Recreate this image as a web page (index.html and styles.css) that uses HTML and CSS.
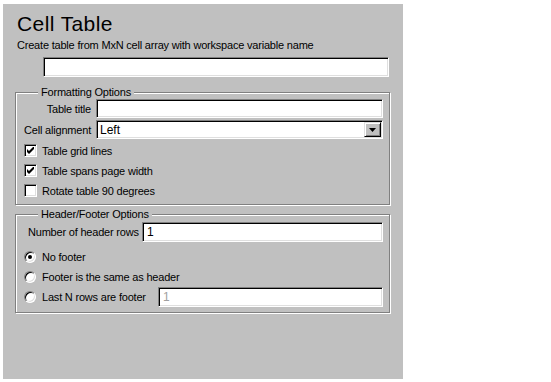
FILE: index.html
```html
<!DOCTYPE html>
<html lang="en">
<head>
    <meta charset="UTF-8">
    <title>Cell Table</title>
    <link rel="stylesheet" href="styles.css">
</head>
<body>

    <div class="panel">
        <h1 class="title">Cell Table</h1>
        <p class="intro">Create table from MxN cell array with workspace variable name</p>
        <div class="field var-name"></div>

        <!-- Formatting options -->
        <fieldset class="group group-format">
            <legend>Formatting Options</legend>
            <div class="row row-title">
                <label class="row-label">Table title</label>
                <div class="field grow"></div>
            </div>
            <div class="row row-select">
                <label class="row-label">Cell alignment</label>
                <div class="field select grow">
                    <span class="select-value">Left</span>
                    <span class="select-btn">
                        <svg width="7" height="4" viewBox="0 0 7 4"><path d="M0 0h7L3.5 4z" fill="#000"/></svg>
                    </span>
                </div>
            </div>
            <div class="check-list">
                <div class="check"><span class="box"><svg width="7" height="7" viewBox="0 0 7 7"><path d="M0 2v3l2 2 5-5V-1L2 4z" fill="#000"/></svg></span>Table grid lines</div>
                <div class="check"><span class="box"><svg width="7" height="7" viewBox="0 0 7 7"><path d="M0 2v3l2 2 5-5V-1L2 4z" fill="#000"/></svg></span>Table spans page width</div>
                <div class="check"><span class="box"></span>Rotate table 90 degrees</div>
            </div>
        </fieldset>

        <!-- Header / footer options -->
        <fieldset class="group group-header">
            <legend>Header/Footer Options</legend>
            <div class="row row-header">
                <label class="row-label">Number of header rows</label>
                <div class="field grow"><span class="field-text">1</span></div>
            </div>
            <div class="radio-list">
                <div class="radio"><span class="dot on"></span>No footer</div>
                <div class="radio"><span class="dot"></span>Footer is the same as header</div>
                <div class="radio radio-last">
                    <span class="dot"></span><span class="radio-text">Last N rows are footer</span>
                    <div class="field grow disabled"><span class="field-text">1</span></div>
                </div>
            </div>
        </fieldset>
    </div>

</body>
</html>
```

FILE: styles.css
```css
body {
    margin: 0;
    background-color: #fff;
    font-family: "Liberation Sans", Arial, sans-serif;
    font-size: 11px;
    letter-spacing: -0.2px;
    color: #000;
}
.panel {
    width: 400px;
    height: 375px;
    margin: 4px 0 0 3px;
    background-color: #c0c0c0;
    overflow: hidden;
}
.title {
    margin: 0;
    padding: 9px 0 0 14px;
    font-size: 21px;
    font-weight: normal;
    letter-spacing: 0.4px;
    line-height: 22px;
}
.intro {
    margin: 4px 0 0 14px;
    line-height: 13px;
}

/* sunken edit box */
.field {
    box-sizing: border-box;
    height: 20px;
    background-color: #fff;
    border: 1px solid;
    border-color: #808080 #fff #fff #808080;
    box-shadow: inset 1px 1px 0 #000, inset -1px -1px 0 #dfdfdf;
    display: flex;
    align-items: center;
}
.var-name {
    width: 346px;
    margin: 5px 0 0 40px;
}
.field-text {
    padding-left: 4px;
    font-size: 12px;
    letter-spacing: 0;
}
.disabled .field-text {
    color: #a0a0a0;
}
.grow {
    flex: 1;
}

/* etched group box */
.group {
    box-sizing: border-box;
    width: 375px;
    margin: 0 0 0 12px;
    padding: 0 6px 0 8px;
    border: 1px solid #808080;
    box-shadow: inset 1px 1px 0 #fff, 1px 1px 0 #fff;
}
.group legend {
    margin-left: 14px;
    padding: 0 3px;
    background-color: #c0c0c0;
    line-height: 13px;
}
.group-format {
    height: 119px;
    margin-top: 9px;
}
.group-header {
    height: 105px;
    margin-top: 3px;
}

.row {
    display: flex;
    align-items: center;
}
.row-title .field,
.row-select .field {
    height: 19px;
}
.row-select {
    margin-top: 2px;
}
.row-header {
    margin-top: 1px;
}
.row-label {
    width: 67px;
    padding-right: 5px;
    text-align: right;
    white-space: nowrap;
}
.row-header .row-label {
    width: 109px;
    padding-left: 4px;
}

/* fake combo box */
.select-value {
    flex: 1;
    padding-left: 3px;
    font-size: 12px;
    letter-spacing: 0;
}
.select-btn {
    box-sizing: border-box;
    width: 17px;
    height: 15px;
    margin-right: 1px;
    background-color: #c0c0c0;
    border: 1px solid;
    border-color: #dfdfdf #000 #000 #dfdfdf;
    box-shadow: inset 1px 1px 0 #fff, inset -1px -1px 0 #808080;
    display: flex;
    align-items: center;
    justify-content: center;
}

/* check boxes */
.check-list {
    margin-top: 5px;
    display: flex;
    flex-direction: column;
    gap: 7px;
}
.check {
    display: flex;
    align-items: center;
    height: 13px;
}
.box {
    box-sizing: border-box;
    width: 13px;
    height: 13px;
    margin-right: 5px;
    background-color: #fff;
    border: 1px solid;
    border-color: #808080 #fff #fff #808080;
    box-shadow: inset 1px 1px 0 #000, inset -1px -1px 0 #dfdfdf;
    display: flex;
    align-items: center;
    justify-content: center;
}

/* radio buttons */
.radio-list {
    margin-top: 9px;
    display: flex;
    flex-direction: column;
    gap: 8px;
}
.radio {
    display: flex;
    align-items: center;
    height: 12px;
}
.dot {
    box-sizing: border-box;
    width: 12px;
    height: 12px;
    margin-right: 6px;
    border-radius: 50%;
    background-color: #fff;
    border: 1px solid;
    border-color: #808080 #fff #fff #808080;
    box-shadow: inset 1px 1px 0 #000, inset -1px -1px 0 #dfdfdf;
    display: flex;
    align-items: center;
    justify-content: center;
}
.dot.on::after {
    content: "";
    width: 4px;
    height: 4px;
    border-radius: 50%;
    background-color: #000;
}
.radio-text {
    width: 116px;
}
.radio-last .field {
    flex: 1;
}
```
